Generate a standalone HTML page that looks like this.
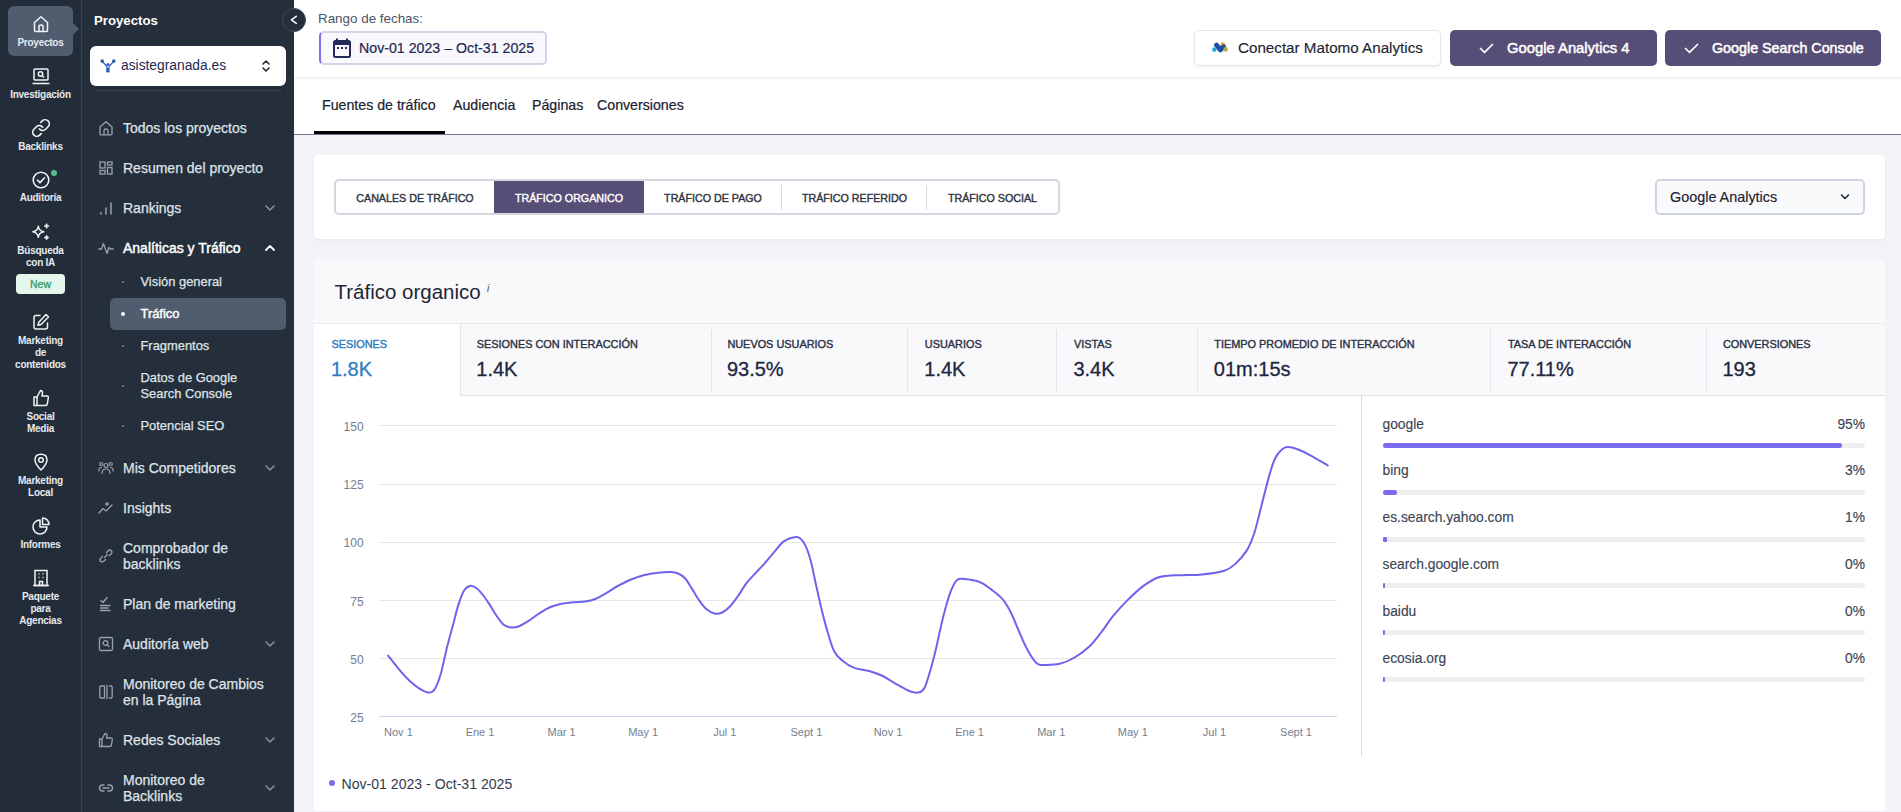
<!DOCTYPE html>
<html><head><meta charset="utf-8">
<style>
*{box-sizing:border-box;margin:0;padding:0}
html,body{width:1901px;height:812px;overflow:hidden;background:#f2f3f7;font-family:"Liberation Sans",sans-serif;}
.a{position:absolute;white-space:nowrap;line-height:1}
#rail{position:absolute;left:0;top:0;width:81px;height:812px;background:#232d39}
#railsep{position:absolute;left:81px;top:0;width:1px;height:812px;background:#39434f}
#side{position:absolute;left:82px;top:0;width:212px;height:812px;background:#252f3b}
.rl{position:absolute;left:0;width:81px;text-align:center;color:#e6e9ee;font-size:10px;font-weight:bold;line-height:12px;white-space:nowrap;letter-spacing:-0.25px}
.ri{position:absolute;left:31px;width:20px;height:20px}
.nv{position:absolute;left:123px;color:#dfe3e8;font-size:14px;line-height:16px;white-space:nowrap;-webkit-text-stroke:0.25px #dfe3e8}
.sn{position:absolute;left:140.5px;color:#dfe3e8;font-size:12.9px;line-height:16px;white-space:nowrap;-webkit-text-stroke:0.25px #dfe3e8}
.ni{position:absolute;left:98px;width:16px;height:16px}
.chev{position:absolute;left:264px;width:12px;height:8px}
.dot{position:absolute;left:122px;width:2px;height:2px;background:#7b848f;border-radius:1px}
.seg{top:192.8px;font-size:10.7px;color:#2f3542;text-align:center;-webkit-text-stroke:0.4px currentColor}
.ml{top:338.6px;font-size:10.9px;-webkit-text-stroke:0.4px currentColor}
.mv{top:359.1px;font-size:20px;-webkit-text-stroke:0.3px currentColor}
.yl{left:300px;width:63.6px;text-align:right;font-size:12px;color:#737e90}
.xl{top:726.6px;width:80px;text-align:center;font-size:11px;color:#737e90}
.sl{left:1382.5px;font-size:13.8px;color:#3d4555;-webkit-text-stroke:0.15px #3d4555}
.sp{left:1765px;width:100px;text-align:right;font-size:13.8px;color:#3d4555;-webkit-text-stroke:0.15px #3d4555}
</style></head><body>
<div id="rail"></div><div id="railsep"></div>
<div id="side"></div>
<!-- RAIL -->
<div style="position:absolute;left:8px;top:6px;width:65px;height:50px;background:#505d6e;border-radius:6px"></div>
<div style="position:absolute;left:73px;top:23px;width:0;height:0;border-top:6.5px solid transparent;border-bottom:6.5px solid transparent;border-left:6px solid #505d6e"></div>
<svg class="ri" style="top:14px" viewBox="0 0 20 20" fill="none" stroke="#f1f3f5" stroke-width="1.5" stroke-linejoin="round"><path d="M3.5 8.5 L10 2.8 L16.5 8.5 V16.5 Q16.5 17.5 15.5 17.5 H4.5 Q3.5 17.5 3.5 16.5 Z"/><path d="M8 17.5 V12.5 Q8 11 10 11 Q12 11 12 12.5 V17.5"/></svg>
<div class="rl" style="top:37.3px">Proyectos</div>
<svg class="ri" style="top:66px" viewBox="0 0 20 20" fill="none" stroke="#f1f3f5" stroke-width="1.5"><rect x="3" y="3" width="14" height="11" rx="1"/><path d="M1.5 17.5 H18.5"/><circle cx="9.5" cy="8" r="2.2"/><path d="M11.2 9.7 L13 11.5"/></svg>
<div class="rl" style="top:88.5px">Investigación</div>
<svg class="ri" style="top:118px" viewBox="0 0 24 24" fill="none" stroke="#f1f3f5" stroke-width="1.95" stroke-linecap="round" stroke-linejoin="round"><path d="M10 13a5 5 0 0 0 7.54.54l3-3a5 5 0 0 0-7.07-7.07l-1.72 1.71"/><path d="M14 11a5 5 0 0 0-7.54-.54l-3 3a5 5 0 0 0 7.07 7.07l1.71-1.71"/></svg>
<div class="rl" style="top:140.5px">Backlinks</div>
<svg class="ri" style="top:170px" viewBox="0 0 20 20" fill="none" stroke="#f1f3f5" stroke-width="1.6" stroke-linecap="round" stroke-linejoin="round"><circle cx="10" cy="10" r="7.8"/><path d="M6.5 10.2 L9 12.6 L13.5 7.8"/></svg>
<div style="position:absolute;left:50.5px;top:170px;width:6px;height:6px;border-radius:3px;background:#56bd86"></div>
<div class="rl" style="top:192.0px">Auditoría</div>
<svg class="ri" style="top:222px" viewBox="0 0 20 20"><path d="M7.3 4.2 Q8 9.1 12.8 9.8 Q8 10.5 7.3 15.4 Q6.6 10.5 1.8 9.8 Q6.6 9.1 7.3 4.2Z" fill="none" stroke="#f1f3f5" stroke-width="1.4" stroke-linejoin="round"/><path d="M15.6 1.5 Q16 3.6 18.1 4 Q16 4.4 15.6 6.5 Q15.2 4.4 13.1 4 Q15.2 3.6 15.6 1.5Z" fill="#f1f3f5" stroke="#f1f3f5" stroke-width="0.6" stroke-linejoin="round"/><path d="M15.6 13 Q16 15.1 18.1 15.5 Q16 15.9 15.6 18 Q15.2 15.9 13.1 15.5 Q15.2 15.1 15.6 13Z" fill="#f1f3f5" stroke="#f1f3f5" stroke-width="0.6" stroke-linejoin="round"/></svg>
<div class="rl" style="top:245.2px">Búsqueda<br>con IA</div>
<div style="position:absolute;left:16px;top:274px;width:49px;height:20px;background:#e3f7ec;border-radius:4px;color:#3d9d6c;font-size:10.5px;line-height:21.5px;text-align:center;-webkit-text-stroke:0.35px #3d9d6c">New</div>
<svg class="ri" style="top:312px" viewBox="0 0 20 20" fill="none" stroke="#f1f3f5" stroke-width="1.5" stroke-linejoin="round" stroke-linecap="round"><path d="M9 3.5 H5 Q3 3.5 3 5.5 V15 Q3 17 5 17 H14.5 Q16.5 17 16.5 15 V11"/><path d="M15 2.5 L17.5 5 L10 12.5 L7 13.3 L7.8 10.3 Z"/></svg>
<div class="rl" style="top:334.5px">Marketing<br>de<br>contenidos</div>
<svg class="ri" style="top:388px" viewBox="0 0 20 20" fill="none" stroke="#f1f3f5" stroke-width="1.5" stroke-linejoin="round"><path d="M3 9 H6 V17.5 H3 Z"/><path d="M6 9 L9.5 2.5 Q11.5 2.5 11.5 5 L11 8 H16 Q17.5 8 17.3 9.8 L16.3 16 Q16 17.5 14.5 17.5 H6"/></svg>
<div class="rl" style="top:410.5px">Social<br>Media</div>
<svg class="ri" style="top:452px" viewBox="0 0 20 20" fill="none" stroke="#f1f3f5" stroke-width="1.5"><path d="M10 18 Q4 12 4 8 Q4 2.3 10 2.3 Q16 2.3 16 8 Q16 12 10 18Z" stroke-linejoin="round"/><circle cx="10" cy="8" r="2.3"/></svg>
<div class="rl" style="top:474.5px">Marketing<br>Local</div>
<svg class="ri" style="top:516px" viewBox="0 0 20 20" fill="none" stroke="#f1f3f5" stroke-width="1.5" stroke-linejoin="round"><path d="M9 4 A7 7 0 1 0 16 11 H9 Z"/><path d="M11.5 2 A6.5 6.5 0 0 1 18 8.5 H11.5 Z"/></svg>
<div class="rl" style="top:538.5px">Informes</div>
<svg class="ri" style="top:568px" viewBox="0 0 20 20" fill="none" stroke="#f1f3f5" stroke-width="1.5"><path d="M4 2.5 H16 V17.5 H4 Z"/><path d="M2 17.5 H18"/><path d="M8.5 17.5 V13.5 H11.5 V17.5"/><path d="M7.5 6 H8.5 M11.5 6 H12.5 M7.5 9.5 H8.5 M11.5 9.5 H12.5"/></svg>
<div class="rl" style="top:591.0px">Paquete<br>para<br>Agencias</div>

<!-- HEADER -->
<div style="position:absolute;left:294px;top:0;width:1607px;height:78px;background:#fff;border-bottom:1px solid #eff0f3"></div>
<div style="position:absolute;left:294px;top:79px;width:1607px;height:56px;background:#fff;border-bottom:1px solid #6e7886"></div>
<div style="position:absolute;left:282px;top:8px;width:24px;height:24px;border-radius:12px;background:#252f3b;border:1px solid #424b55"></div>
<svg style="position:absolute;left:288px;top:14px" width="12" height="12" viewBox="0 0 12 12" fill="none" stroke="#fff" stroke-width="1.5" stroke-linecap="round" stroke-linejoin="round"><path d="M8.3 2.3 L3.4 5.8 L8.3 9.3"/></svg>
<div class="a" style="left:318px;top:11.5px;font-size:13.4px;color:#4b5563">Rango de fechas:</div>
<div style="position:absolute;left:319px;top:31px;width:228px;height:34px;background:#f8f8fd;border:2px solid #d3d5e6;border-left:2px solid #7b70ee;border-radius:5px"></div>
<svg style="position:absolute;left:333px;top:38px" width="18" height="20" viewBox="0 0 18 20"><path d="M4 0.5 V3 M14 0.5 V3" stroke="#262a5a" stroke-width="2"/><rect x="1" y="3" width="16" height="16" rx="1.5" fill="none" stroke="#262a5a" stroke-width="2"/><rect x="1" y="3" width="16" height="4" fill="#262a5a"/><rect x="4" y="9" width="2" height="2" fill="#262a5a"/><rect x="8" y="9" width="2" height="2" fill="#262a5a"/><rect x="12" y="9" width="2" height="2" fill="#262a5a"/></svg>
<div class="a" style="left:359px;top:40.8px;font-size:14.2px;color:#232a52;-webkit-text-stroke:0.2px #232a52">Nov-01 2023 – Oct-31 2025</div>
<div style="position:absolute;left:1194px;top:30px;width:247px;height:36px;background:#fff;border:1px solid #e5e7ed;border-radius:5px;box-shadow:0 1px 3px rgba(30,40,60,0.08)"></div>
<svg style="position:absolute;left:1211px;top:41px" width="18" height="12" viewBox="0 0 18 12"><path d="M5.5 4 L9.5 9 L12.5 5.5" stroke="#1f4fa8" stroke-width="4.8" stroke-linecap="round" stroke-linejoin="round" fill="none"/><circle cx="11.8" cy="3.8" r="2.5" fill="#f0a04a"/><path d="M10 7.5 L12.5 5" stroke="#1f4fa8" stroke-width="3.5" stroke-linecap="round"/><circle cx="14.6" cy="8.4" r="2.3" fill="#b9a648"/><circle cx="3.3" cy="8.6" r="2.3" fill="#2ba6e0"/></svg>
<div class="a" style="left:1238px;top:39.8px;font-size:15.2px;color:#1f2533;-webkit-text-stroke:0.15px #1f2533">Conectar Matomo Analytics</div>
<div style="position:absolute;left:1450px;top:30px;width:207px;height:36px;background:#574e77;border-radius:5px"></div>
<svg style="position:absolute;left:1479px;top:43px" width="15" height="11" viewBox="0 0 15 11" fill="none" stroke="#fff" stroke-width="1.7" stroke-linecap="round" stroke-linejoin="round"><path d="M1.5 5.5 L5.5 9.3 L13.5 1.5"/></svg>
<div class="a" style="left:1507px;top:41.3px;font-size:14.8px;color:#fff;-webkit-text-stroke:0.5px #fff">Google Analytics 4</div>
<div style="position:absolute;left:1665px;top:30px;width:216px;height:36px;background:#574e77;border-radius:5px"></div>
<svg style="position:absolute;left:1684px;top:43px" width="15" height="11" viewBox="0 0 15 11" fill="none" stroke="#fff" stroke-width="1.7" stroke-linecap="round" stroke-linejoin="round"><path d="M1.5 5.5 L5.5 9.3 L13.5 1.5"/></svg>
<div class="a" style="left:1712px;top:41.3px;font-size:14.3px;color:#fff;-webkit-text-stroke:0.5px #fff">Google Search Console</div>
<!-- TABS -->
<div class="a" style="left:322px;top:97.9px;font-size:14.2px;color:#1b2130;-webkit-text-stroke:0.2px #1b2130">Fuentes de tráfico</div>
<div class="a" style="left:453px;top:97.9px;font-size:14.2px;color:#1b2130;-webkit-text-stroke:0.2px #1b2130">Audiencia</div>
<div class="a" style="left:532px;top:97.9px;font-size:14.2px;color:#1b2130;-webkit-text-stroke:0.2px #1b2130">Páginas</div>
<div class="a" style="left:597px;top:97.9px;font-size:14.2px;color:#1b2130;-webkit-text-stroke:0.2px #1b2130">Conversiones</div>
<div style="position:absolute;left:314px;top:131px;width:131px;height:3px;background:#000"></div>
<!-- CARD1 -->
<div style="position:absolute;left:314px;top:155px;width:1571px;height:84px;background:#fff;border-radius:4px;box-shadow:0 2px 3px rgba(30,40,60,0.035)"></div>
<div style="position:absolute;left:334px;top:179px;width:726px;height:36px;border:2px solid #d5d7e1;border-radius:5px;background:#fff"></div>
<div style="position:absolute;left:494px;top:181px;width:150px;height:32px;background:#574e77"></div>
<div style="position:absolute;left:781px;top:185px;width:1px;height:25px;background:#d5d7e1"></div>
<div style="position:absolute;left:926px;top:185px;width:1px;height:25px;background:#d5d7e1"></div>
<div class="a seg" style="left:336px;width:158px">CANALES DE TRÁFICO</div>
<div class="a seg" style="left:494px;width:150px;color:#fff">TRÁFICO ORGANICO</div>
<div class="a seg" style="left:644px;width:138px">TRÁFICO DE PAGO</div>
<div class="a seg" style="left:782px;width:145px">TRÁFICO REFERIDO</div>
<div class="a seg" style="left:927px;width:131px">TRÁFICO SOCIAL</div>
<div style="position:absolute;left:1655px;top:179px;width:210px;height:36px;border:2px solid #d0d4e0;border-radius:5px;background:#f9fafc"></div>
<div class="a" style="left:1670px;top:190px;font-size:14.4px;color:#1b2130;-webkit-text-stroke:0.15px #1b2130">Google Analytics</div>
<svg style="position:absolute;left:1839px;top:193px" width="12" height="8" viewBox="0 0 12 8" fill="none" stroke="#1b2130" stroke-width="1.5" stroke-linecap="round" stroke-linejoin="round"><path d="M2.5 2 L6 5.5 L9.5 2"/></svg>

<!-- CARD2 -->
<div style="position:absolute;left:314px;top:259px;width:1571px;height:552px;background:#f9f9fb;border-radius:3px"></div>
<div class="a" style="left:334.5px;top:281.5px;font-size:20.5px;color:#1f2533">Tráfico organico</div>
<div class="a" style="left:487px;top:284px;font-size:10px;font-style:italic;color:#3a4150">i</div>
<div style="position:absolute;left:314px;top:323px;width:1571px;height:1px;background:#ebecf0"></div>
<div style="position:absolute;left:314px;top:395px;width:1571px;height:1px;background:#e4e4e6"></div>
<div style="position:absolute;left:314px;top:324px;width:147px;height:72px;background:#fff;border-right:1px solid #e3e5ea"></div>
<div style="position:absolute;left:314px;top:396px;width:1571px;height:415px;background:#fff;border-radius:0 0 3px 3px"></div>
<div class="a ml" style="left:331.4px;color:#2f7cc3">SESIONES</div>
<div class="a mv" style="left:330.9px;color:#2f7cc3">1.8K</div>
<div class="a ml" style="left:476.8px;color:#2c3345">SESIONES CON INTERACCIÓN</div>
<div class="a mv" style="left:476.3px;color:#1e2640">1.4K</div>
<div style="position:absolute;left:711px;top:330px;width:1px;height:61px;background:#e3e5ea"></div>
<div class="a ml" style="left:727.4px;color:#2c3345">NUEVOS USUARIOS</div>
<div class="a mv" style="left:726.9px;color:#1e2640">93.5%</div>
<div style="position:absolute;left:907px;top:330px;width:1px;height:61px;background:#e3e5ea"></div>
<div class="a ml" style="left:924.8px;color:#2c3345">USUARIOS</div>
<div class="a mv" style="left:924.3px;color:#1e2640">1.4K</div>
<div style="position:absolute;left:1056px;top:330px;width:1px;height:61px;background:#e3e5ea"></div>
<div class="a ml" style="left:1073.9px;color:#2c3345">VISTAS</div>
<div class="a mv" style="left:1073.4px;color:#1e2640">3.4K</div>
<div style="position:absolute;left:1197px;top:330px;width:1px;height:61px;background:#e3e5ea"></div>
<div class="a ml" style="left:1214.3px;color:#2c3345">TIEMPO PROMEDIO DE INTERACCIÓN</div>
<div class="a mv" style="left:1213.8px;color:#1e2640">01m:15s</div>
<div style="position:absolute;left:1490px;top:330px;width:1px;height:61px;background:#e3e5ea"></div>
<div class="a ml" style="left:1507.9px;color:#2c3345">TASA DE INTERACCIÓN</div>
<div class="a mv" style="left:1507.4px;color:#1e2640">77.11%</div>
<div style="position:absolute;left:1706px;top:330px;width:1px;height:61px;background:#e3e5ea"></div>
<div class="a ml" style="left:1722.9px;color:#2c3345">CONVERSIONES</div>
<div class="a mv" style="left:1722.4px;color:#1e2640">193</div>
<svg style="position:absolute;left:0;top:0" width="1901" height="812" viewBox="0 0 1901 812">
<rect x="379" y="425" width="958" height="1" fill="#e6e6e6"/>
<rect x="379" y="484" width="958" height="1" fill="#e6e6e6"/>
<rect x="379" y="542" width="958" height="1" fill="#e6e6e6"/>
<rect x="379" y="600" width="958" height="1" fill="#e6e6e6"/>
<rect x="379" y="658" width="958" height="1" fill="#e6e6e6"/>
<rect x="379" y="716" width="958" height="1" fill="#ccd6eb"/>
<path d="M388.1,655.6 C389.2,657.0 392.5,661.3 394.8,664.2 C397.1,667.1 399.8,670.4 402.2,673.1 C404.6,675.9 406.8,678.2 409.5,680.7 C412.2,683.2 415.2,685.8 418.4,687.8 C421.6,689.8 426.0,692.4 428.7,692.6 C431.4,692.9 432.7,692.3 434.7,689.3 C436.7,686.3 438.6,681.1 440.6,674.5 C442.6,667.9 444.5,657.3 446.5,649.4 C448.5,641.5 450.4,634.7 452.4,627.3 C454.4,619.9 456.3,611.3 458.3,605.1 C460.3,598.9 462.2,593.5 464.2,590.3 C466.2,587.1 468.0,586.2 470.1,585.9 C472.2,585.6 474.8,587.0 476.9,588.5 C479.0,590.0 480.9,592.5 482.9,595.0 C484.9,597.5 486.8,600.3 489.0,603.6 C491.2,606.9 493.6,611.4 495.9,614.8 C498.2,618.2 500.5,621.8 502.8,623.9 C505.1,626.0 507.1,626.9 509.7,627.3 C512.3,627.7 515.1,627.6 518.3,626.5 C521.4,625.4 525.1,623.1 528.6,620.9 C532.1,618.7 535.5,615.7 539.0,613.5 C542.5,611.3 545.7,609.1 549.3,607.5 C552.9,605.9 556.5,605.0 560.5,604.1 C564.5,603.2 569.3,602.7 573.4,602.3 C577.5,601.9 581.4,602.1 585.0,601.6 C588.6,601.1 591.7,600.5 595.3,599.0 C598.9,597.5 602.9,595.1 606.6,592.9 C610.4,590.7 613.9,588.1 617.8,586.0 C621.7,583.9 625.5,581.8 629.8,580.0 C634.1,578.2 638.9,576.5 643.6,575.3 C648.4,574.1 653.7,573.2 658.3,572.7 C662.9,572.2 667.9,572.0 671.2,572.1 C674.5,572.2 675.8,572.5 678.1,573.5 C680.4,574.5 682.7,575.8 685.0,578.3 C687.3,580.8 689.6,585.0 691.9,588.6 C694.2,592.2 696.3,596.4 698.8,599.8 C701.2,603.2 703.9,606.9 706.6,609.2 C709.3,611.5 712.4,613.2 715.0,613.7 C717.6,614.2 719.7,613.7 722.2,612.5 C724.7,611.3 727.3,609.2 729.9,606.5 C732.5,603.8 734.9,600.4 737.7,596.5 C740.5,592.6 743.5,587.1 746.5,583.2 C749.5,579.3 752.4,576.4 755.4,573.2 C758.4,570.0 761.3,567.1 764.3,563.8 C767.2,560.5 769.8,557.1 773.1,553.3 C776.4,549.5 780.3,543.8 784.2,541.1 C788.1,538.4 793.5,537.1 796.4,536.9 C799.3,536.7 800.2,538.2 801.9,540.0 C803.6,541.8 804.9,544.2 806.4,547.7 C807.9,551.2 809.3,555.5 810.8,561.0 C812.3,566.5 813.4,572.8 815.2,581.0 C817.0,589.2 819.8,602.0 821.8,610.3 C823.8,618.6 825.2,623.8 827.2,630.6 C829.2,637.4 831.5,646.0 834.0,651.0 C836.5,656.0 838.7,657.6 842.1,660.4 C845.5,663.2 849.8,666.1 854.3,667.9 C858.8,669.7 864.5,669.6 869.2,671.0 C873.9,672.4 878.2,673.8 882.7,676.0 C887.2,678.2 891.8,681.6 896.3,684.1 C900.8,686.6 906.0,689.9 909.8,691.3 C913.6,692.7 916.8,692.9 919.3,692.3 C921.8,691.7 922.9,691.0 924.7,687.5 C926.5,684.0 928.3,677.3 930.1,671.3 C931.9,665.3 933.6,658.7 935.4,651.3 C937.2,643.9 939.0,634.6 940.8,626.9 C942.6,619.2 944.5,611.5 946.3,605.2 C948.1,598.9 949.7,593.3 951.7,589.0 C953.7,584.7 955.2,580.7 958.4,579.2 C961.5,577.7 966.8,579.2 970.6,579.8 C974.5,580.4 977.9,581.1 981.5,582.9 C985.1,584.6 988.7,587.5 992.3,590.3 C995.9,593.1 999.9,596.0 1003.1,599.8 C1006.3,603.6 1008.6,607.9 1011.3,613.3 C1014.0,618.7 1016.7,626.2 1019.4,632.3 C1022.1,638.4 1024.6,644.7 1027.5,649.9 C1030.4,655.1 1034.1,661.0 1037.0,663.5 C1039.9,666.0 1041.2,664.9 1045.0,664.9 C1048.8,664.9 1054.9,665.0 1059.8,663.8 C1064.7,662.6 1069.7,660.4 1074.6,657.5 C1079.5,654.6 1084.9,650.7 1089.3,646.5 C1093.7,642.3 1097.2,637.4 1101.2,632.4 C1105.2,627.4 1108.6,621.6 1113.0,616.2 C1117.4,610.8 1122.9,604.8 1127.8,599.9 C1132.7,595.0 1137.6,590.3 1142.5,586.6 C1147.4,582.9 1152.6,579.6 1157.3,577.7 C1162.0,575.9 1166.5,575.9 1170.6,575.5 C1174.7,575.1 1176.7,575.4 1182.0,575.2 C1187.3,575.0 1195.2,575.2 1202.2,574.5 C1209.2,573.8 1218.8,572.6 1224.3,570.8 C1229.8,569.0 1231.7,567.1 1235.4,563.8 C1239.1,560.5 1243.4,555.8 1246.5,550.9 C1249.6,546.0 1251.8,540.4 1253.9,534.2 C1256.1,528.0 1257.6,521.0 1259.4,513.9 C1261.2,506.8 1263.2,498.8 1265.0,491.7 C1266.8,484.6 1268.7,477.2 1270.5,471.4 C1272.3,465.5 1273.6,460.6 1276.1,456.6 C1278.6,452.6 1282.2,448.8 1285.3,447.4 C1288.4,446.0 1290.6,447.1 1294.6,448.3 C1298.6,449.5 1303.8,451.9 1309.3,454.8 C1314.8,457.7 1324.7,463.7 1327.8,465.5" fill="none" stroke="#6f63ee" stroke-width="2" stroke-linejoin="round" stroke-linecap="round"/>
<rect x="1361" y="396" width="1" height="360" fill="#d6d9e5"/>
</svg>
<div class="a yl" style="top:420.9px">150</div>
<div class="a yl" style="top:479.1px">125</div>
<div class="a yl" style="top:537.4px">100</div>
<div class="a yl" style="top:595.6px">75</div>
<div class="a yl" style="top:653.9px">50</div>
<div class="a yl" style="top:712.1px">25</div>
<div class="a xl" style="left:358.4px">Nov 1</div>
<div class="a xl" style="left:440.0px">Ene 1</div>
<div class="a xl" style="left:521.6px">Mar 1</div>
<div class="a xl" style="left:603.2px">May 1</div>
<div class="a xl" style="left:684.8px">Jul 1</div>
<div class="a xl" style="left:766.4px">Sept 1</div>
<div class="a xl" style="left:848.0px">Nov 1</div>
<div class="a xl" style="left:929.6px">Ene 1</div>
<div class="a xl" style="left:1011.2px">Mar 1</div>
<div class="a xl" style="left:1092.8px">May 1</div>
<div class="a xl" style="left:1174.4px">Jul 1</div>
<div class="a xl" style="left:1256.0px">Sept 1</div>
<div class="a sl" style="top:417.5px">google</div>
<div class="a sp" style="top:417.5px">95%</div>
<div style="position:absolute;left:1382.5px;top:443.0px;width:482.5px;height:5px;border-radius:3px;background:#eeeeef"></div>
<div style="position:absolute;left:1382.5px;top:443.0px;width:459.3px;height:5px;border-radius:3px;background:#7a6cee"></div>
<div class="a sl" style="top:464.3px">bing</div>
<div class="a sp" style="top:464.3px">3%</div>
<div style="position:absolute;left:1382.5px;top:489.8px;width:482.5px;height:5px;border-radius:3px;background:#eeeeef"></div>
<div style="position:absolute;left:1382.5px;top:489.8px;width:14.5px;height:5px;border-radius:3px;background:#7a6cee"></div>
<div class="a sl" style="top:511.1px">es.search.yahoo.com</div>
<div class="a sp" style="top:511.1px">1%</div>
<div style="position:absolute;left:1382.5px;top:536.6px;width:482.5px;height:5px;border-radius:3px;background:#eeeeef"></div>
<div style="position:absolute;left:1382.5px;top:536.6px;width:4.3px;height:5px;border-radius:1px;background:#7a6cee"></div>
<div class="a sl" style="top:557.9px">search.google.com</div>
<div class="a sp" style="top:557.9px">0%</div>
<div style="position:absolute;left:1382.5px;top:583.4px;width:482.5px;height:5px;border-radius:3px;background:#eeeeef"></div>
<div style="position:absolute;left:1382.5px;top:583.4px;width:2.5px;height:5px;border-radius:1px;background:#7a6cee"></div>
<div class="a sl" style="top:604.7px">baidu</div>
<div class="a sp" style="top:604.7px">0%</div>
<div style="position:absolute;left:1382.5px;top:630.2px;width:482.5px;height:5px;border-radius:3px;background:#eeeeef"></div>
<div style="position:absolute;left:1382.5px;top:630.2px;width:2.5px;height:5px;border-radius:1px;background:#7a6cee"></div>
<div class="a sl" style="top:651.5px">ecosia.org</div>
<div class="a sp" style="top:651.5px">0%</div>
<div style="position:absolute;left:1382.5px;top:677.0px;width:482.5px;height:5px;border-radius:3px;background:#eeeeef"></div>
<div style="position:absolute;left:1382.5px;top:677.0px;width:2.5px;height:5px;border-radius:1px;background:#7a6cee"></div>
<div style="position:absolute;left:329px;top:780px;width:6px;height:6px;border-radius:3px;background:#7a6cee"></div>
<div class="a" style="left:341.5px;top:776.7px;font-size:14.1px;color:#333a4a">Nov-01 2023 - Oct-31 2025</div>
<!-- SIDEBAR -->
<div class="a" style="left:94px;top:13.5px;font-size:13.2px;font-weight:bold;color:#fff">Proyectos</div>
<div style="position:absolute;left:90px;top:46px;width:196px;height:40px;background:#fff;border-radius:6px"></div>
<svg style="position:absolute;left:96px;top:54px" width="24" height="24" viewBox="0 0 24 24"><path d="M6.4 7.3 L10.6 12.4 M17.6 7.3 L13.2 12.4" stroke="#2b5db2" stroke-width="1.3" stroke-linecap="round"/><circle cx="6.2" cy="7.1" r="1.8" fill="#2b5db2"/><circle cx="17.8" cy="7.1" r="1.8" fill="#2b5db2"/><circle cx="11.9" cy="10.5" r="1.5" fill="#2b5db2"/><path d="M10.2 13.3 H13.6 V18.4 H10.2 Z" fill="#2b5db2"/></svg>
<div class="a" style="left:121px;top:59px;font-size:13.8px;color:#1f2a55">asistegranada.es</div>
<svg style="position:absolute;left:261px;top:59px" width="10" height="14" viewBox="0 0 10 14" fill="none" stroke="#2a2f3a" stroke-width="1.6" stroke-linecap="round" stroke-linejoin="round"><path d="M2 5 L5 2 L8 5"/><path d="M2 9 L5 12 L8 9"/></svg>
<div style="position:absolute;left:96px;top:90px;width:185px;height:1px;border-top:1px dotted #4a5461"></div>

<!-- NAV -->
<svg class="ni" style="top:120px" viewBox="0 0 16 16" fill="none" stroke="#9aa1aa" stroke-width="1.3" stroke-linejoin="round"><path d="M2 7 L8 1.8 L14 7 V14 Q14 14.8 13.2 14.8 H2.8 Q2 14.8 2 14 Z"/><path d="M6 14.8 V10.5 Q6 9 8 9 Q10 9 10 10.5 V14.8"/></svg>
<div class="nv" style="top:120px">Todos los proyectos</div>
<svg class="ni" style="top:160px" viewBox="0 0 16 16" fill="none" stroke="#9aa1aa" stroke-width="1.3"><rect x="2" y="2" width="5" height="6"/><rect x="9.5" y="2" width="4.5" height="3"/><rect x="2" y="10.5" width="5" height="3.5"/><rect x="9.5" y="7.5" width="4.5" height="6.5"/></svg>
<div class="nv" style="top:160px">Resumen del proyecto</div>
<svg class="ni" style="top:200px" viewBox="0 0 16 16" fill="none" stroke="#9aa1aa" stroke-width="1.5" stroke-linecap="round"><path d="M3 14 V12.5 M8 14 V8 M13 14 V3"/></svg>
<div class="nv" style="top:200px">Rankings</div>
<svg class="chev" style="top:204px" viewBox="0 0 12 8" fill="none" stroke="#8b929c" stroke-width="1.5" stroke-linecap="round" stroke-linejoin="round"><path d="M2 2 L6 6 L10 2"/></svg>
<svg class="ni" style="top:240px" viewBox="0 0 16 16" fill="none" stroke="#9aa1aa" stroke-width="1.3" stroke-linejoin="round" stroke-linecap="round"><path d="M0.8 9 H3.5 L5.5 3.5 L9 13.5 L11 7.5 L12.5 9 H15.2"/></svg>
<div class="nv" style="top:240px;color:#fff;-webkit-text-stroke:0.45px #fff">Analíticas y Tráfico</div>
<svg class="chev" style="top:244px" viewBox="0 0 12 8" fill="none" stroke="#fff" stroke-width="1.8" stroke-linecap="round" stroke-linejoin="round"><path d="M2 6 L6 2 L10 6"/></svg>
<div class="dot" style="top:281px"></div>
<div class="sn" style="top:274px">Visión general</div>
<div style="position:absolute;left:110px;top:298px;width:176px;height:32px;background:#505d6e;border-radius:5px"></div>
<div style="position:absolute;left:121px;top:312px;width:4px;height:4px;border-radius:2px;background:#fff"></div>
<div class="sn" style="top:306px;color:#fff;-webkit-text-stroke:0.45px #fff">Tráfico</div>
<div class="dot" style="top:345px"></div>
<div class="sn" style="top:338px">Fragmentos</div>
<div class="dot" style="top:385px"></div>
<div class="sn" style="top:370px">Datos de Google<br>Search Console</div>
<div class="dot" style="top:425px"></div>
<div class="sn" style="top:418px">Potencial SEO</div>
<svg class="ni" style="top:460px" viewBox="0 0 16 16" fill="none" stroke="#9aa1aa" stroke-width="1.2" stroke-linecap="round"><circle cx="8" cy="5.5" r="2"/><circle cx="3.2" cy="4" r="1.5"/><circle cx="12.8" cy="4" r="1.5"/><path d="M4 13.5 Q4 9 8 9 Q12 9 12 13.5"/><path d="M0.8 11 Q0.8 7.5 3.5 7.5"/><path d="M15.2 11 Q15.2 7.5 12.5 7.5"/></svg>
<div class="nv" style="top:460px">Mis Competidores</div>
<svg class="chev" style="top:464px" viewBox="0 0 12 8" fill="none" stroke="#8b929c" stroke-width="1.5" stroke-linecap="round" stroke-linejoin="round"><path d="M2 2 L6 6 L10 2"/></svg>
<svg class="ni" style="top:500px" viewBox="0 0 16 16" fill="none" stroke="#9aa1aa" stroke-width="1.3" stroke-linecap="round" stroke-linejoin="round"><path d="M1 13 L5 8.5 L8 11 L14 5"/><path d="M9 2.5 V5.5 M7.5 4 H10.5"/></svg>
<div class="nv" style="top:500px">Insights</div>
<svg class="ni" style="top:548px" viewBox="0 0 16 16" fill="none" stroke="#9aa1aa" stroke-width="1.3" stroke-linecap="round"><path d="M6.5 9.5 L9.5 6.5"/><path d="M8.5 4.5 L10 3 Q11.8 1.2 13.3 2.7 Q14.8 4.2 13 6 L11.5 7.5"/><path d="M7.5 11.5 L6 13 Q4.2 14.8 2.7 13.3 Q1.2 11.8 3 10 L4.5 8.5"/></svg>
<div class="nv" style="top:540px">Comprobador de<br>backlinks</div>
<svg class="ni" style="top:596px" viewBox="0 0 16 16" fill="none" stroke="#9aa1aa" stroke-width="1.3" stroke-linecap="round" stroke-linejoin="round"><path d="M3 4.5 L5 6.5 L9 1.5"/><path d="M2.5 9.5 H12 M2.5 12 H10 M2.5 14.5 H12"/></svg>
<div class="nv" style="top:596px">Plan de marketing</div>
<svg class="ni" style="top:636px" viewBox="0 0 16 16" fill="none" stroke="#9aa1aa" stroke-width="1.3"><rect x="1.5" y="1.5" width="13" height="13" rx="1.5"/><circle cx="7.5" cy="7" r="2.3"/><path d="M9.2 8.7 L11 10.5" stroke-linecap="round"/></svg>
<div class="nv" style="top:636px">Auditoría web</div>
<svg class="chev" style="top:640px" viewBox="0 0 12 8" fill="none" stroke="#8b929c" stroke-width="1.5" stroke-linecap="round" stroke-linejoin="round"><path d="M2 2 L6 6 L10 2"/></svg>
<svg class="ni" style="top:684px" viewBox="0 0 16 16" fill="none" stroke="#9aa1aa" stroke-width="1.3" stroke-linejoin="round"><path d="M6.5 2 H3 Q1.8 2 1.8 3.2 V12.8 Q1.8 14 3 14 H6.5 Z"/><path d="M9 0.8 V15.2"/><path d="M11 2 H13 Q14.2 2 14.2 3.2 V12.8 Q14.2 14 13 14 H11"/></svg>
<div class="nv" style="top:676px">Monitoreo de Cambios<br>en la Página</div>
<svg class="ni" style="top:732px" viewBox="0 0 16 16" fill="none" stroke="#9aa1aa" stroke-width="1.3" stroke-linejoin="round"><path d="M1.5 7 H4 V14.5 H1.5 Z"/><path d="M4 7 L7 1.5 Q9 1.5 9 3.5 L8.6 6 H13 Q14.5 6 14.3 7.5 L13.5 13 Q13.2 14.5 11.8 14.5 H4"/></svg>
<div class="nv" style="top:732px">Redes Sociales</div>
<svg class="chev" style="top:736px" viewBox="0 0 12 8" fill="none" stroke="#8b929c" stroke-width="1.5" stroke-linecap="round" stroke-linejoin="round"><path d="M2 2 L6 6 L10 2"/></svg>
<svg class="ni" style="top:780px" viewBox="0 0 16 16" fill="none" stroke="#9aa1aa" stroke-width="1.4" stroke-linecap="round"><path d="M6 5 H4.5 Q1.5 5 1.5 8 Q1.5 11 4.5 11 H6"/><path d="M10 5 H11.5 Q14.5 5 14.5 8 Q14.5 11 11.5 11 H10"/><path d="M5 8 H11"/></svg>
<div class="nv" style="top:772px">Monitoreo de<br>Backlinks</div>
<svg class="chev" style="top:784px" viewBox="0 0 12 8" fill="none" stroke="#8b929c" stroke-width="1.5" stroke-linecap="round" stroke-linejoin="round"><path d="M2 2 L6 6 L10 2"/></svg>
</body></html>
